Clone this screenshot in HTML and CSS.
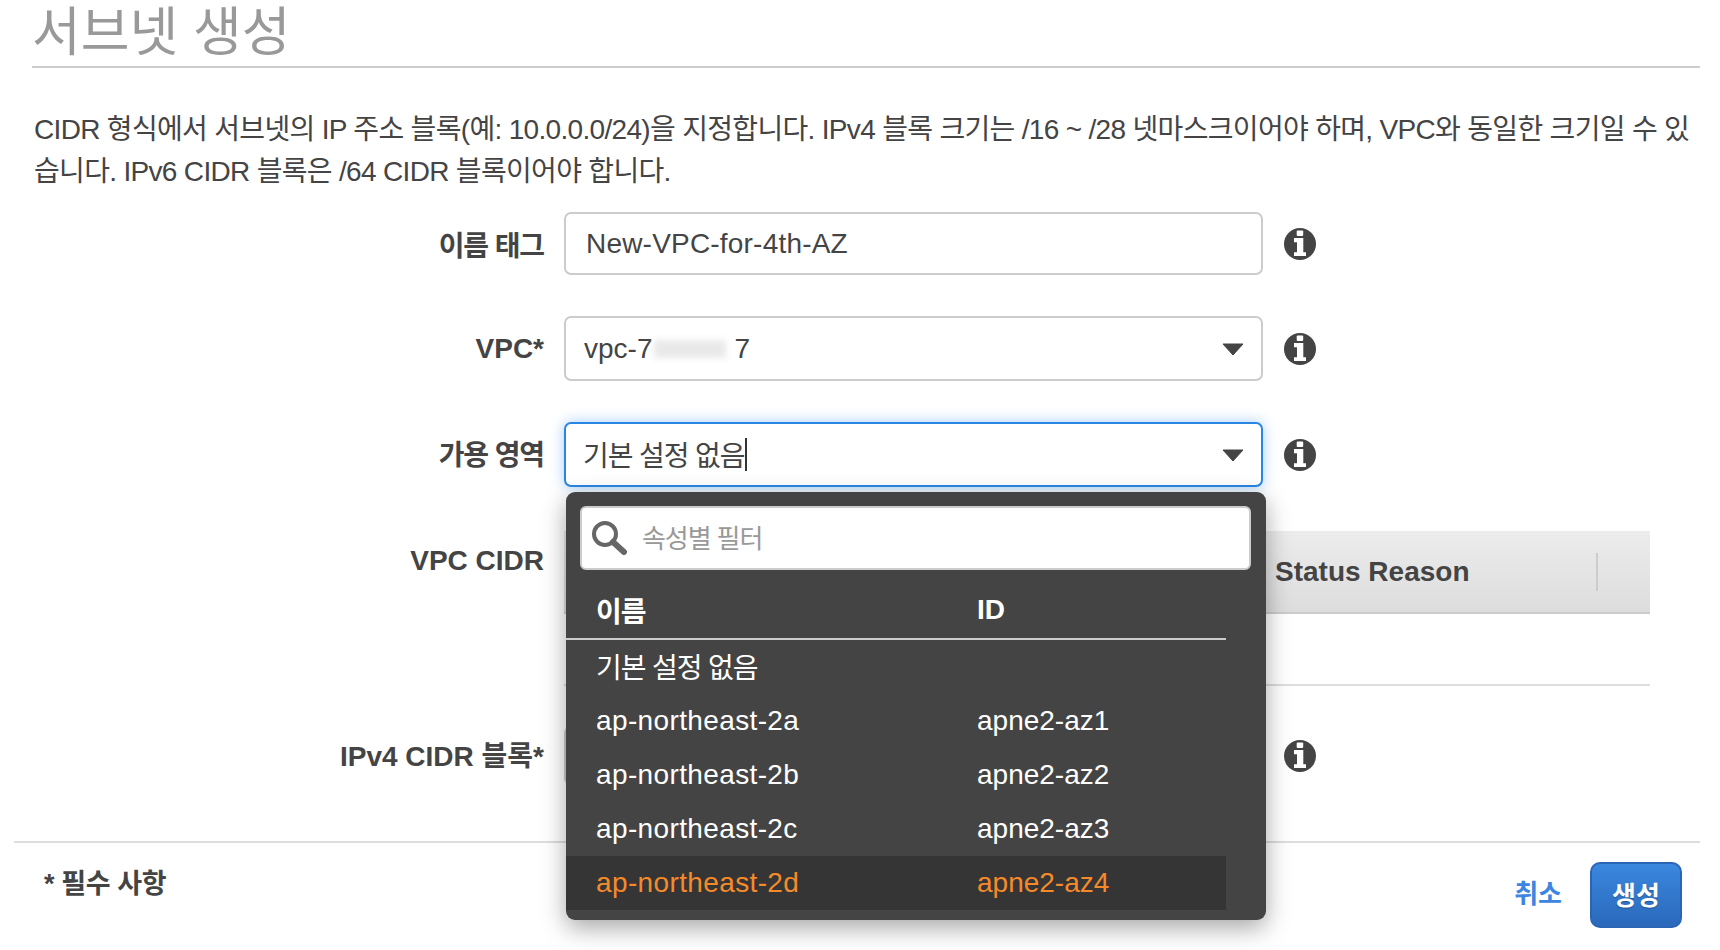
FILE: index.html
```html
<!DOCTYPE html>
<html lang="ko">
<head>
    <meta charset="UTF-8">
    <title>서브넷 생성</title>
    <link rel="stylesheet" href="styles.css">
</head>
<body>
    <svg class="icon-defs" width="0" height="0">
        <symbol id="info" viewBox="0 0 32 32">
            <circle cx="16" cy="16" r="16" fill="#444"/>
            <rect x="12.7" y="2.5" width="6.5" height="5.5" rx="1" fill="#fff"/>
            <path d="M10 10h9.3v14.3H22V28H10v-3.7h3v-10h-3z" fill="#fff"/>
        </symbol>
        <symbol id="arrow" viewBox="0 0 22 13">
            <path d="M1 1h20L11 12z" fill="#444" stroke="#444" stroke-linejoin="round"/>
        </symbol>
    </svg>

    <div class="page">
        <h1 class="title">서브넷 생성</h1>
        <p class="intro">CIDR 형식에서 서브넷의 IP 주소 블록(예: 10.0.0.0/24)을 지정합니다. IPv4 블록 크기는 /16 ~ /28 넷마스크이어야 하며, VPC와 동일한 크기일 수 있<br>습니다. IPv6 CIDR 블록은 /64 CIDR 블록이어야 합니다.</p>

        <div class="form">
            <div class="row row-name">
                <label class="label ko">이름 태그</label>
                <div class="field">New-VPC-for-4th-AZ</div>
                <svg class="info"><use href="#info"/></svg>
            </div>
            <div class="row row-vpc">
                <label class="label">VPC*</label>
                <div class="field select">
                    <span>vpc-7</span><span class="blur"></span><span>7</span>
                    <svg class="arrow"><use href="#arrow"/></svg>
                </div>
                <svg class="info"><use href="#info"/></svg>
            </div>
            <div class="row row-az">
                <label class="label ko">가용 영역</label>
                <div class="field select focused">
                    <span class="ko value">기본 설정 없음</span><span class="caret"></span>
                    <svg class="arrow"><use href="#arrow"/></svg>
                    <div class="dropdown">
                        <div class="filter">
                            <svg class="search" viewBox="0 0 35 34">
                                <circle cx="13" cy="13" r="11" fill="none" stroke="#666" stroke-width="4"/>
                                <path d="M21 21l11 10" stroke="#666" stroke-width="6" stroke-linecap="round"/>
                            </svg>
                            <span class="placeholder ko">속성별 필터</span>
                        </div>
                        <div class="option head"><span class="ko">이름</span><span>ID</span></div>
                        <div class="option"><span class="ko none">기본 설정 없음</span><span></span></div>
                        <div class="option"><span class="zone">ap-northeast-2a</span><span>apne2-az1</span></div>
                        <div class="option"><span class="zone">ap-northeast-2b</span><span>apne2-az2</span></div>
                        <div class="option"><span class="zone">ap-northeast-2c</span><span>apne2-az3</span></div>
                        <div class="option active"><span class="zone">ap-northeast-2d</span><span>apne2-az4</span></div>
                    </div>
                </div>
                <svg class="info"><use href="#info"/></svg>
            </div>
            <div class="row row-cidr">
                <label class="label">VPC CIDR</label>
                <div class="cidr-table">
                    <div class="cidr-head"><span class="cidr-col">Status Reason</span></div>
                    <div class="cidr-body"></div>
                </div>
            </div>
            <div class="row row-block">
                <label class="label">IPv4 CIDR 블록*</label>
                <div class="field"></div>
                <svg class="info"><use href="#info"/></svg>
            </div>
        </div>

        <div class="footer">
            <span class="required">* 필수 사항</span>
            <div class="actions">
                <a class="cancel">취소</a>
                <button class="create">생성</button>
            </div>
        </div>
    </div>
</body>
</html>
```

FILE: styles.css
```css
html, body {
    margin: 0;
    height: 950px;
    overflow: hidden;
    background-color: #fff;
}

body {
    font-family: "Liberation Sans", "Noto Sans CJK KR", sans-serif;
    color: #444;
    font-size: 28px;
}

.icon-defs {
    position: absolute;
}

.ko {
    letter-spacing: -1.1px;
}

.title {
    margin: 0 20px 0 32px;
    height: 66px;
    line-height: 66px;
    border-bottom: 2px solid #ccc;
    font-size: 53px;
    font-weight: 400;
    color: #999;
}

.intro {
    margin: 41px 20px 0 34px;
    font-size: 28px;
    line-height: 42px;
    letter-spacing: -0.68px;
    white-space: nowrap;
}

.form {
    margin-top: 19px;
}

.row {
    display: flex;
    align-items: center;
}

.label {
    width: 544px;
    margin-right: 20px;
    text-align: right;
    font-weight: 700;
    flex-shrink: 0;
}

.field {
    position: relative;
    box-sizing: border-box;
    display: flex;
    align-items: center;
    width: 699px;
    height: 65px;
    padding: 0 20px;
    border: 2px solid #ccc;
    border-radius: 7px;
    background-color: #fff;
}

.info {
    width: 32px;
    height: 32px;
    margin-left: 21px;
}

.row-name .field {
    height: 63px;
    letter-spacing: 0.2px;
}

.row-vpc,
.row-az {
    margin-top: 41px;
}

.row-az .label {
    padding-bottom: 3px;
}

.select {
    padding-left: 18px;
}

.value {
    margin-left: -1px;
    padding-bottom: 2px;
}

.arrow {
    position: absolute;
    right: 17px;
    top: 25px;
    width: 22px;
    height: 13px;
}

.blur {
    display: inline-block;
    width: 72px;
    height: 18px;
    margin: 0 8px 0 2px;
    background-color: #e9e9e9;
    filter: blur(3px);
}

.focused {
    border-color: #2b86e3;
    box-shadow: 0 0 14px rgba(60, 150, 245, 0.45);
}

.caret {
    display: inline-block;
    width: 2px;
    height: 33px;
    background-color: #333;
    margin-left: 1px;
}

.dropdown {
    position: absolute;
    z-index: 5;
    top: 68px;
    left: 0;
    box-sizing: border-box;
    width: 700px;
    height: 428px;
    padding-top: 14px;
    border-radius: 9px;
    background-color: #444;
    color: #fff;
    box-shadow: 0 8px 24px rgba(0, 0, 0, 0.35);
}

.filter {
    box-sizing: border-box;
    display: flex;
    align-items: center;
    height: 64px;
    width: 671px;
    margin-left: 14px;
    padding-left: 10px;
    border: 2px solid #ccc;
    border-radius: 6px;
    background-color: #fff;
}

.search {
    width: 35px;
    height: 34px;
    margin-right: 15px;
}

.placeholder {
    padding-bottom: 4px;
    font-size: 26px;
    color: #999;
}

.option {
    display: grid;
    grid-template-columns: 381px 1fr;
    align-items: center;
    width: 660px;
    height: 54px;
    box-sizing: border-box;
    padding-left: 30px;
}

.zone {
    letter-spacing: 0.37px;
}

.none {
    padding-bottom: 3px;
}

.head {
    height: 70px;
    padding-top: 12px;
    font-weight: 700;
    border-bottom: 2px solid #ccc;
}

.active {
    background-color: #353535;
    color: #f58a2b;
}

.row-cidr {
    margin-top: 44px;
    align-items: flex-start;
}

.row-cidr .label {
    padding-top: 14px;
}

.cidr-table {
    width: 1086px;
}

.cidr-head {
    box-sizing: border-box;
    height: 83px;
    display: flex;
    align-items: center;
    padding-left: 711px;
    background: linear-gradient(#ececec, #ddd);
    border-bottom: 2px solid #ccc;
    font-weight: 700;
}

.cidr-col {
    width: 321px;
    height: 38px;
    line-height: 38px;
    border-right: 2px solid #ccc;
}

.cidr-body {
    height: 70px;
    border-bottom: 2px solid #ddd;
}

.row-block {
    margin-top: 40px;
}

.row-block .label {
    padding-bottom: 4px;
}

.row-block .field {
    height: 59px;
}

.footer {
    display: flex;
    align-items: flex-start;
    justify-content: space-between;
    margin: 56px 20px 0 14px;
    border-top: 2px solid #ddd;
    padding-top: 19px;
}

.required {
    margin: 0 0 0 30px;
    font-size: 27px;
    font-weight: 700;
    letter-spacing: -0.4px;
}

.actions {
    display: flex;
    align-items: center;
    gap: 28px;
    margin-right: 18px;
}

.cancel {
    margin-bottom: 8px;
    color: #3a86e0;
    font-size: 26px;
    font-weight: 700;
}

.create {
    box-sizing: border-box;
    width: 92px;
    height: 66px;
    padding: 0 0 3px;
    border: 2px solid #2a66b5;
    border-radius: 10px;
    background: linear-gradient(#3a88de, #2a69bb);
    color: #fff;
    font-family: inherit;
    font-size: 26px;
    font-weight: 700;
    text-shadow: 0 1px 1px rgba(0, 0, 0, 0.3);
}
```
